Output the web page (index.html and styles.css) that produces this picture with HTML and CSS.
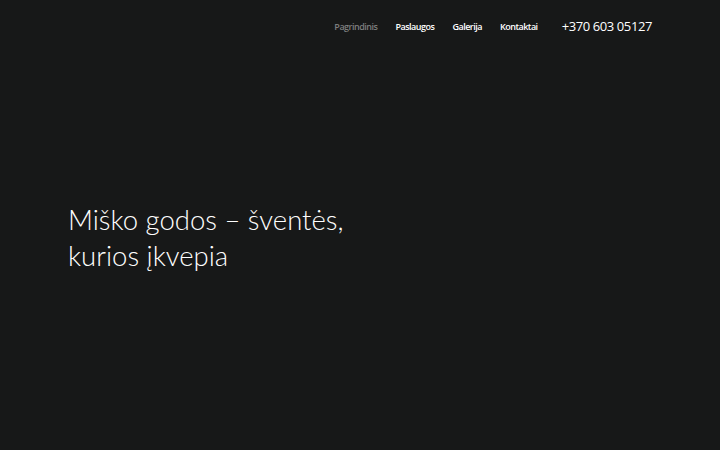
FILE: index.html
```html
<!DOCTYPE html>
<html lang="lt">
<head>
    <meta charset="UTF-8">
    <meta name="viewport" content="width=device-width, initial-scale=1.0">
    <title>Miško godos</title>
    <link rel="stylesheet" href="styles.css">
</head>
<body>
    <header class="site-header">
        <nav class="main-nav">
            <a href="#" class="nav-link active">Pagrindinis</a>
            <a href="#" class="nav-link">Paslaugos</a>
            <a href="#" class="nav-link">Galerija</a>
            <a href="#" class="nav-link">Kontaktai</a>
        </nav>
        <a href="tel:+37060305127" class="phone">+370 603 05127</a>
    </header>

    <section class="hero">
        <h1>Miško godos – šventės,<br>kurios įkvepia</h1>
    </section>
</body>
</html>
```

FILE: styles.css
```css
html, body {
    margin: 0;
    height: 100%;
}
body {
    background-color: #171818;
    color: #ffffff;
    font-family: "Open Sans", Arial, sans-serif;
}
.site-header {
    display: flex;
    justify-content: flex-end;
    align-items: center;
    padding: 16px 68px 0 0;
    height: 20px;
}
.main-nav {
    display: flex;
    gap: 18px;
}
.nav-link {
    color: #ffffff;
    text-decoration: none;
    font-size: 9px;
    font-weight: 600;
    letter-spacing: -0.5px;
}
.nav-link.active {
    color: #7d7e7e;
}
.phone {
    margin-left: 24px;
    color: #ffffff;
    text-decoration: none;
    font-size: 13px;
    letter-spacing: -0.4px;
}
.hero {
    padding: 166px 0 0 68px;
}
.hero h1 {
    margin: 0;
    font-family: Lato, "Noto Sans", sans-serif;
    font-weight: 300;
    font-size: 27.5px;
    line-height: 36px;
}
```
